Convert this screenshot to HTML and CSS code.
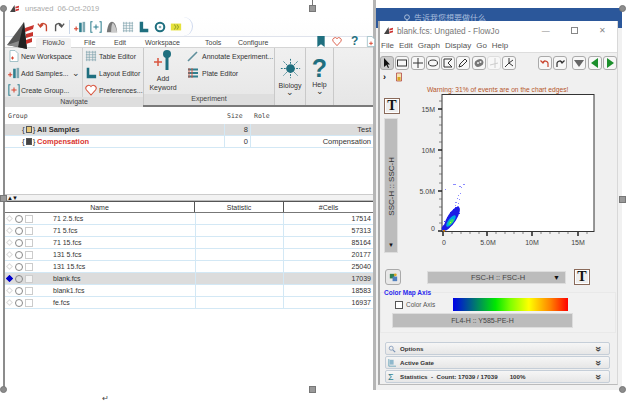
FILE: index.html
```html
<!DOCTYPE html>
<html lang="en">

<head>
  <meta charset="UTF-8" />
  <meta name="viewport" content="width=device-width, initial-scale=1.0" />
  <title>FlowJo</title>
  <link rel="stylesheet" href="styles.css">
</head>

<body>
  <div class="canvas">

    <!-- Workspace window -->
    <div class="workspace">
      <div class="title-row">
        <svg class="mini-logo" viewBox="0 0 12 10"><path d="M1 9 6 1l1 8z" fill="#444"/><path d="M7 3l4-1v2l-4 1zM7 6l4-1v2l-4 1z" fill="#c33"/></svg>
        <span>unsaved&nbsp; 06-Oct-2019</span>
      </div>
      <div class="quick-row">
        <svg class="logo" viewBox="0 0 27 27">
          <path d="M0 23 17 0l3 27z" fill="#555"/>
          <path d="M17 0l3 27-9-2z" fill="#222"/>
          <path d="M0 23l11 2 1-6z" fill="#8a8a8a"/>
          <path d="M18 6l9-3-1 4-8 3zM19 12l7-2v4l-7 2zM19 18l6-2v4l-6 2z" fill="#c8352f"/>
        </svg>
        <div class="quick-icons">
          <svg viewBox="0 0 14 14"><path d="M11 12V7a3.500 3.500 0 0 0-7-1M1 3l3 4 3-3" fill="none" stroke="#c8452f" stroke-width="1.600"/></svg>
          <svg viewBox="0 0 14 14"><path d="M3 12V7a3.500 3.500 0 0 1 7-1M13 3l-3 4-3-3" fill="none" stroke="#555" stroke-width="1.600"/></svg>
          <i class="quick-sep"></i>
          <svg viewBox="0 0 14 14"><rect x="6" y="2" width="3" height="11" fill="#2f7f8f"/><rect x="10" y="1" width="3" height="12" fill="#7fa9b3"/><path d="M0 9h5M2.500 6.500v5" stroke="#d9442f" stroke-width="1.300"/></svg>
          <svg viewBox="0 0 14 14"><path d="M3 1H1v12h2M11 1h2v12h-2M7 4v6M4 7h6" fill="none" stroke="#2f7f8f" stroke-width="1.200"/></svg>
          <svg viewBox="0 0 14 14"><path d="M1 13C2 5 4 1 7 1s5 4 6 12z" fill="#777"/><path d="M6 13C6 6 7 3 8 2c2 2 4 6 5 11z" fill="#c9c9c9"/></svg>
          <svg viewBox="0 0 14 14"><path d="M1 2.500h12M1 5.500h12M1 8.500h12M1 11.500h12M2 1v12M5 1v12M9 1v12M12 1v12" stroke="#7fa3ad" stroke-width=".8"/></svg>
          <svg viewBox="0 0 14 14"><path d="M2 1h4v8h6v4H2z" fill="#1f6f7f"/></svg>
          <svg viewBox="0 0 14 14"><circle cx="7" cy="7" r="5" fill="none" stroke="#1f6f7f" stroke-width="2.400"/><circle cx="7" cy="7" r="1.600" fill="#7fa9b3"/></svg>
          <svg viewBox="0 0 14 14"><rect x="1" y="3" width="12" height="8" fill="#e6e23c"/><path d="M5 4l2 3-2 3M8 4l2 3-2 3" fill="none" stroke="#9aa52a" stroke-width="1.200"/></svg>
        </div>
      </div>

      <div class="tab-row">
        <span class="tab tab-active">FlowJo</span>
        <span class="tab tab-file">File</span>
        <span class="tab tab-edit">Edit</span>
        <span class="tab tab-workspace">Workspace</span>
        <span class="tab tab-tools">Tools</span>
        <span class="tab tab-configure">Configure</span>
        <div class="tab-icons">
          <svg viewBox="0 0 10 12"><path d="M1 0h8v12L5 9l-4 3z" fill="#1f6f7f"/></svg>
          <svg viewBox="0 0 12 12"><path d="M6 11 1.500 6a2.700 2.700 0 0 1 4.500-3.500A2.700 2.700 0 0 1 10.500 6z" fill="#fff" stroke="#d9553f" stroke-width="1.100"/></svg>
          <span class="tab-help">?</span>
          <svg viewBox="0 0 10 12"><path d="M1 .5h5l3 3v8H1z" fill="#fff" stroke="#8fb5bd" stroke-width=".8"/><path d="M3 8h4M5 6v4" stroke="#d9442f"/></svg>
        </div>
      </div>

      <div class="ribbon">
        <div class="ribbon-group group-navigate">
          <div class="ribbon-body">
            <div class="ribbon-col col-nav">
              <div class="ribbon-item">
                <svg viewBox="0 0 12 12"><path d="M2 .5h5l3 3v8H2z" fill="#fff" stroke="#8fb5bd" stroke-width=".8"/><path d="M3 8h3M4.500 6.500v3" stroke="#d9442f"/></svg>
                <span>New Workspace</span>
              </div>
              <div class="ribbon-item">
                <svg viewBox="0 0 14 14"><rect x="6" y="2" width="3" height="11" fill="#2f7f8f"/><rect x="10" y="1" width="3" height="12" fill="#7fa9b3"/><path d="M0 9h5M2.500 6.500v5" stroke="#d9442f" stroke-width="1.300"/></svg>
                <span>Add Samples...</span>
                <b class="chev">⌄</b>
              </div>
              <div class="ribbon-item">
                <svg viewBox="0 0 14 14"><path d="M3 1H1v12h2M11 1h2v12h-2" fill="none" stroke="#2f7f8f" stroke-width="1.200"/><path d="M7 4v6M4 7h6" stroke="#d9442f" stroke-width="1.200"/></svg>
                <span>Create Group...</span>
              </div>
            </div>
            <div class="ribbon-col col-editors">
              <div class="ribbon-item">
                <svg viewBox="0 0 14 14"><path d="M1 2.500h12M1 5.500h12M1 8.500h12M1 11.500h12M2 1v12M5 1v12M9 1v12M12 1v12" stroke="#7fa3ad" stroke-width=".8"/></svg>
                <span>Table Editor</span>
              </div>
              <div class="ribbon-item">
                <svg viewBox="0 0 14 14"><path d="M2 1h3v8h8v4H2z" fill="#1f6f7f"/></svg>
                <span>Layout Editor</span>
              </div>
              <div class="ribbon-item">
                <svg viewBox="0 0 12 12"><path d="M6 11 1.500 6a2.700 2.700 0 0 1 4.500-3.500A2.700 2.700 0 0 1 10.500 6z" fill="#fff" stroke="#d9553f" stroke-width="1.100"/></svg>
                <span>Preferences...</span>
              </div>
            </div>
          </div>
          <div class="ribbon-caption">Navigate</div>
        </div>

        <div class="ribbon-group group-experiment">
          <div class="ribbon-body">
            <div class="add-keyword">
              <svg viewBox="0 0 20 22"><path d="M1 13h8M5 9v8" stroke="#d9553f" stroke-width="1.500"/><circle cx="14" cy="5" r="4" fill="#1f6f7f"/><rect x="12.500" y="7" width="3" height="14" fill="#1f6f7f"/></svg>
              <span>Add<br>Keyword</span>
            </div>
            <div class="ribbon-col col-experiment">
              <div class="ribbon-item">
                <svg viewBox="0 0 12 12"><path d="M1 11 10 2" stroke="#5f8f9c" stroke-width="1.600"/></svg>
                <span>Annotate Experiment...</span>
              </div>
              <div class="ribbon-item">
                <svg viewBox="0 0 12 12"><path d="M1 2.500h10M1 6h10M1 9.500h10" stroke="#2f7f8f" stroke-width="2"/><path d="M2 1v10M5 1v10" stroke="#d9553f" stroke-width=".9"/></svg>
                <span>Plate Editor</span>
              </div>
            </div>
          </div>
          <div class="ribbon-caption">Experiment</div>
        </div>

        <div class="ribbon-group group-biology">
          <svg viewBox="0 0 24 24"><g stroke="#1f6f7f" stroke-width="1.100" stroke-dasharray="2 1.500"><path d="M12 1v22M1 12h22M4 4l16 16M20 4 4 20"/></g><circle cx="12" cy="12" r="5" fill="#1f6f7f"/></svg>
          <span>Biology</span>
          <b class="chev">⌄</b>
        </div>
        <div class="ribbon-group group-help">
          <span class="big-help">?</span>
          <span>Help</span>
          <b class="chev">⌄</b>
        </div>
      </div>

      <!-- Groups table -->
      <div class="groups">
        <div class="group-head">
          <span class="cell c-group">Group</span>
          <span class="cell c-size">Size</span>
          <span class="cell c-role">Role</span>
        </div>
        <div class="group-row row-selected">
          <span class="cell c-group"><em class="brace">{<i class="brace-doc"></i>}</em><strong>All Samples</strong></span>
          <span class="cell c-size num">8</span>
          <span class="cell c-role num">Test</span>
        </div>
        <div class="group-row">
          <span class="cell c-group"><em class="brace">{<i class="brace-doc brace-comp"></i>}</em><strong class="comp">Compensation</strong></span>
          <span class="cell c-size num">0</span>
          <span class="cell c-role num">Compensation</span>
        </div>
      </div>

      <div class="divider"><span>▲▼</span></div>

      <!-- Samples table -->
      <div class="sample-head">
        <span class="cell c-name">Name</span>
        <span class="cell c-stat">Statistic</span>
        <span class="cell c-cells">#Cells</span>
      </div>
      <div class="sample-row"><span class="marks"><i class="diamond"></i><i class="ring"></i><i class="box"></i></span><span class="cell c-file">71 2.5.fcs</span><span class="cell c-stat"></span><span class="cell c-cells num">17514</span></div>
      <div class="sample-row"><span class="marks"><i class="diamond"></i><i class="ring"></i><i class="box"></i></span><span class="cell c-file">71 5.fcs</span><span class="cell c-stat"></span><span class="cell c-cells num">57313</span></div>
      <div class="sample-row"><span class="marks"><i class="diamond"></i><i class="ring"></i><i class="box"></i></span><span class="cell c-file">71 15.fcs</span><span class="cell c-stat"></span><span class="cell c-cells num">85164</span></div>
      <div class="sample-row"><span class="marks"><i class="diamond"></i><i class="ring"></i><i class="box"></i></span><span class="cell c-file">131 5.fcs</span><span class="cell c-stat"></span><span class="cell c-cells num">20177</span></div>
      <div class="sample-row"><span class="marks"><i class="diamond"></i><i class="ring"></i><i class="box"></i></span><span class="cell c-file">131 15.fcs</span><span class="cell c-stat"></span><span class="cell c-cells num">25040</span></div>
      <div class="sample-row row-selected"><span class="marks"><i class="diamond diamond-on"></i><i class="ring"></i><i class="box box-on"></i></span><span class="cell c-file">blank.fcs</span><span class="cell c-stat"></span><span class="cell c-cells num">17039</span></div>
      <div class="sample-row"><span class="marks"><i class="diamond"></i><i class="ring"></i><i class="box"></i></span><span class="cell c-file">blank1.fcs</span><span class="cell c-stat"></span><span class="cell c-cells num">18583</span></div>
      <div class="sample-row"><span class="marks"><i class="diamond"></i><i class="ring"></i><i class="box"></i></span><span class="cell c-file">fe.fcs</span><span class="cell c-stat"></span><span class="cell c-cells num">16937</span></div>
    </div>

    <!-- Word window behind the graph -->
    <div class="word-bar">
      <svg viewBox="0 0 10 10"><circle cx="5" cy="4" r="3" fill="none" stroke="#c5d3e8"/><path d="M4 8h2" stroke="#c5d3e8"/></svg>
      <span>告诉我您想要做什么</span>
    </div>
    <div class="word-edge"></div>

    <!-- Graph window -->
    <div class="graph">
      <div class="graph-title">
        <svg class="mini-logo" viewBox="0 0 12 10"><path d="M1 9 6 1l1 8z" fill="#444"/><path d="M7 3l4-1v2l-4 1zM7 6l4-1v2l-4 1z" fill="#c33"/></svg>
        <span class="graph-name">blank.fcs: Ungated - FlowJo</span>
        <span class="win-btn">—</span>
        <span class="win-btn win-max"></span>
        <span class="win-btn win-close">✕</span>
      </div>
      <div class="graph-menu">
        <span>File</span><span>Edit</span><span>Graph</span><span>Display</span><span>Go</span><span>Help</span>
      </div>
      <div class="graph-tools">
        <span class="tool tool-on"><svg viewBox="0 0 10 10"><path d="M2 0v9l2.500-2 1.500 3 1-.500L5.500 6.500H8z" fill="#111"/></svg></span>
        <span class="tool"><svg viewBox="0 0 10 10"><rect x=".5" y="2" width="9" height="6" fill="none" stroke="#333"/></svg></span>
        <span class="tool"><svg viewBox="0 0 10 10"><path d="M5 0v10M0 5h10" stroke="#333"/></svg></span>
        <span class="tool"><svg viewBox="0 0 10 10"><ellipse cx="5" cy="5" rx="4.500" ry="3" fill="none" stroke="#333"/></svg></span>
        <span class="tool"><svg viewBox="0 0 10 10"><path d="M1 1h8L5 5l4 4H1z" fill="none" stroke="#333"/></svg></span>
        <span class="tool"><svg viewBox="0 0 10 10"><path d="M1 9l1-3 5-5 2 2-5 5z" fill="none" stroke="#333"/></svg></span>
        <span class="tool"><svg viewBox="0 0 10 10"><ellipse cx="5" cy="5" rx="4.500" ry="3.500" fill="#777" transform="rotate(-25 5 5)"/><circle cx="4" cy="5" r="1" fill="#eee"/><circle cx="6.500" cy="4" r="1" fill="#eee"/></svg></span>
        <span class="tool tool-off"><svg viewBox="0 0 10 10"><path d="M6 0v10M1 7l8-2" stroke="#ccc"/></svg></span>
        <span class="tool"><svg viewBox="0 0 10 10"><path d="M5 0v5L1 9M5 5l4 3M5 5l4-3" fill="none" stroke="#333"/></svg></span>
        <span class="tool tool-undo"><svg viewBox="0 0 10 10"><path d="M8 9V5a3 3 0 0 0-5-1M.5 2.500 3 5l2-2.500" fill="none" stroke="#c8452f" stroke-width="1.200"/></svg></span>
        <span class="tool"><svg viewBox="0 0 10 10"><path d="M2 9V5a3 3 0 0 1 5-1M9.500 2.500 7 5 5 2.500" fill="none" stroke="#333" stroke-width="1.200"/></svg></span>
        <span class="tool tool-nav"><svg viewBox="0 0 10 10"><path d="M0 2h10L5 9z" fill="#666"/></svg></span>
        <span class="tool"><svg viewBox="0 0 10 10"><path d="M8 0v10L1 5z" fill="#1b8f2b"/></svg></span>
        <span class="tool"><svg viewBox="0 0 10 10"><path d="M2 0v10l7-5z" fill="#1b8f2b"/></svg></span>
      </div>
      <div class="graph-sub">
        <span class="caret">›</span>
        <svg viewBox="0 0 6 10"><path d="M.5 1h5v8h-5z" fill="#f4e3b0" stroke="#a33" stroke-width=".7"/><rect x="1.500" y="5" width="3" height="3.500" fill="#d9a520"/></svg>
      </div>
      <div class="warning">Warning: 31% of events are on the chart edges!</div>

      <div class="plot-area">
        <div class="plot-left">
          <span class="t-btn">T</span>
          <div class="y-axis">
            <span class="y-label">SSC-H :: SSC-H</span>
            <span class="y-arrow">▼</span>
          </div>
        </div>
        <svg class="plot" viewBox="0 0 190 170">
          <rect x="37" y=".5" width="152" height="137" fill="#fff" stroke="#333"/>
          <!-- axis ticks -->
          <path d="M33 15h4M33 56h4M33 97h4M33 137h4" stroke="#222" stroke-width="1.500"/>
          <path d="M34 7h3M34 23h3M34 31h3M34 39h3M34 48h3M34 64h3M34 72h3M34 80h3M34 89h3M34 105h3M34 113h3M34 121h3M34 129h3" stroke="#555" stroke-width=".7"/>
          <path d="M38 138v4M82 138v4M127 138v4M173 138v4" stroke="#222" stroke-width="1.500"/>
          <path d="M47 138v2M56 138v2M65 138v2M74 138v2M91 138v2M100 138v2M109 138v2M118 138v2M136 138v2M145 138v2M154 138v2M163 138v2M182 138v2" stroke="#555" stroke-width=".7"/>
          <text x="30" y="18" class="tick" text-anchor="end">15M</text>
          <text x="30" y="59" class="tick" text-anchor="end">10M</text>
          <text x="30" y="100" class="tick" text-anchor="end">5.0M</text>
          <text x="30" y="137" class="tick" text-anchor="end">0</text>
          <text x="39" y="151" class="tick" text-anchor="middle">0</text>
          <text x="83" y="151" class="tick" text-anchor="middle">5.0M</text>
          <text x="127" y="151" class="tick" text-anchor="middle">10M</text>
          <text x="173" y="151" class="tick" text-anchor="middle">15M</text>
          <!-- events -->
          <g fill="#8a8aff">
            <rect x="40" y="95" width="1" height="1"/><rect x="48" y="90" width="3" height="1"/><rect x="54" y="92" width="2" height="1"/><rect x="58" y="90" width="2" height="1"/><rect x="56" y="93" width="1" height="1"/><rect x="53" y="101" width="1" height="1"/><rect x="55" y="99" width="1" height="1"/><rect x="52" y="104" width="1" height="1"/><rect x="54" y="105" width="1" height="1"/><rect x="50" y="108" width="2" height="1"/><rect x="53" y="109" width="1" height="1"/><rect x="50" y="111" width="1" height="1"/><rect x="52" y="112" width="2" height="1"/>
          </g>
          <g fill="#3c3cf5">
            <rect x="50" y="113" width="4" height="2"/><rect x="48" y="115" width="5" height="2"/><rect x="45" y="118" width="1" height="1"/><rect x="53" y="116" width="1" height="1"/><rect x="42" y="123" width="1" height="1"/><rect x="39" y="127" width="1" height="1"/><rect x="54" y="119" width="1" height="1"/>
          </g>
          <ellipse cx="47" cy="124" rx="13" ry="4.500" transform="rotate(-58 47 124)" fill="#1c1ce6"/>
          <ellipse cx="41" cy="133" rx="5" ry="3" transform="rotate(-35 41 133)" fill="#1c1ce6"/>
          <ellipse cx="46" cy="127" rx="7" ry="2.600" transform="rotate(-52 46 127)" fill="#00a8e0"/>
          <ellipse cx="46" cy="128" rx="3.600" ry="1.500" transform="rotate(-50 46 128)" fill="#35e060"/>
          <rect x="45" y="128" width="1" height="1" fill="#e8e830"/>
          <rect x="38" y="136" width="2" height="1.500" fill="#d98000"/>
        </svg>
      </div>

      <div class="x-row">
        <span class="swatch-btn"><svg viewBox="0 0 12 12"><path d="M2 2h5v5H2z" fill="#2f7f4f"/><path d="M5 5h5v5H5z" fill="#4f7fbf"/><circle cx="8" cy="3" r="1.500" fill="#d9a520"/></svg></span>
        <div class="x-select"><span>FSC-H :: FSC-H</span><b>▼</b></div>
        <span class="t-btn">T</span>
      </div>

      <div class="color-panel">
        <div class="color-title">Color Map Axis</div>
        <div class="color-row">
          <i class="check"></i>
          <span>Color Axis</span>
          <div class="gradient"></div>
        </div>
        <div class="param-btn">FL4-H :: Y585-PE-H</div>
      </div>

      <div class="drawer">
        <svg viewBox="0 0 10 10"><circle cx="4" cy="4" r="2.500" fill="none" stroke="#7a93b5"/><path d="M6 6l3 3" stroke="#7a93b5" stroke-width="1.500"/></svg>
        <span>Options</span><b>»</b>
      </div>
      <div class="drawer">
        <svg viewBox="0 0 10 10"><path d="M1 0v9h9" fill="none" stroke="#5f9fb5"/><rect x="2" y="1" width="5" height="6" fill="#8fb8cc"/></svg>
        <span>Active Gate</span><b>»</b>
      </div>
      <div class="drawer">
        <em class="sigma">Σ</em>
        <span class="stat-text"><span>Statistics&nbsp; -&nbsp; Count: 17039 / 17039</span><span>100%</span></span><b>»</b>
      </div>
    </div>

    <!-- Document image handles -->
    <i class="edge-line"></i>
    <i class="handle h-tl"></i>
    <i class="handle h-tr"></i>
    <i class="handle h-bl"></i>
    <i class="handle h-br"></i>
    <i class="handle-sq s-t"></i>
    <i class="handle-sq s-b"></i>
    <i class="handle-sq s-l"></i>
    <i class="handle-sq s-r"></i>
    <i class="handle-stem"></i>
    <span class="return-mark">↵</span>
  </div>
</body>

</html>
```

FILE: styles.css
```css
* {
  margin: 0;
  padding: 0;
  box-sizing: border-box;
}

body {
  background-color: #fff;
  font-family: "Liberation Sans", sans-serif;
  color: #333;
  overflow: hidden;
}

i,
em {
  font-style: normal;
}

svg {
  display: block;
  flex: none;
}

.canvas {
  position: relative;
  width: 628px;
  height: 403px;
  overflow: hidden;
}

/* workspace window */
.workspace {
  position: absolute;
  left: 5px;
  top: 0;
  width: 371px;
  height: 390px;
  border-right: 3px solid #b5b5b5;
  font-size: 7px;
}

.title-row {
  display: flex;
  align-items: center;
  gap: 5px;
  height: 17px;
  padding: 0 0 0 4px;
  color: #aaa;
  font-size: 7.500px;
  line-height: 18px;
}

.mini-logo {
  width: 11px;
  height: 9px;
}

.quick-row {
  position: relative;
  height: 19px;
  background: linear-gradient(#fff, #fdfdfd);
}

.logo {
  position: absolute;
  left: 2px;
  top: 5px;
  width: 27px;
  height: 27px;
  z-index: 2;
}

.quick-icons {
  display: flex;
  align-items: center;
  gap: 4px;
  height: 19px;
  width: 188px;
  padding-left: 32px;
  border-right: 1px solid #cfd9ee;
  border-radius: 0 10px 10px 0;
}

.quick-icons svg {
  width: 12px;
  height: 12px;
}

.quick-sep {
  width: 1px;
  height: 14px;
  background: #c8d6e8;
}

.tab-row {
  display: flex;
  align-items: center;
  height: 11px;
  border-top: 1px solid #dfe3ec;
  position: relative;
  color: #444;
}

.tab {
  position: absolute;
  top: 1px;
  line-height: 10px;
}

.tab-active {
  left: 31px;
  width: 35px;
  height: 11px;
  text-align: center;
  background: #f2f2f2;
  border-radius: 2px 2px 0 0;
}

.tab-file {
  left: 79px;
}

.tab-edit {
  left: 109px;
}

.tab-workspace {
  left: 140px;
}

.tab-tools {
  left: 200px;
}

.tab-configure {
  left: 233px;
}

.tab-icons {
  position: absolute;
  left: 311px;
  top: -1px;
  display: flex;
  align-items: center;
  gap: 6px;
}

.tab-icons svg {
  width: 10px;
  height: 11px;
}

.tab-help {
  margin: 0 2px 0 3px;
  color: #1f6f7f;
  font-size: 12px;
  font-weight: bold;
  line-height: 11px;
}

.ribbon {
  display: flex;
  height: 60px;
  background: linear-gradient(#f0f0f0, #e6e6e6);
  border-top: 1px solid #d5d5d5;
  border-bottom: 2px solid #7a7a7a;
}

.ribbon-group {
  display: flex;
  flex-direction: column;
  border-right: 1px solid #c9c9c9;
}

.group-navigate {
  width: 139px;
}

.group-experiment {
  width: 131px;
}

.ribbon-body {
  display: flex;
  flex: 1;
}

.ribbon-col {
  display: flex;
  flex-direction: column;
  gap: 3px;
  padding: 1px 0 0 3px;
}

.col-nav {
  width: 78px;
  border-right: 1px solid #d0d0d0;
}

.col-editors {
  padding-left: 2px;
}

.col-experiment {
  padding-left: 5px;
}

.ribbon-item {
  display: flex;
  align-items: center;
  gap: 1px;
  height: 14px;
  white-space: nowrap;
}

.ribbon-item svg {
  width: 12px;
  height: 12px;
}

.col-editors .ribbon-item,
.col-experiment .ribbon-item {
  gap: 2px;
}

.col-experiment .ribbon-item {
  gap: 3px;
}

.chev {
  font-weight: normal;
  line-height: 6px;
  font-size: 9px;
  color: #333;
}

.ribbon-item .chev {
  margin-left: 3px;
}

.ribbon-caption {
  height: 11px;
  line-height: 10px;
  text-align: center;
  background: #dedede;
  color: #444;
}

.add-keyword {
  display: flex;
  flex-direction: column;
  align-items: center;
  width: 38px;
  padding-top: 1px;
  text-align: center;
  line-height: 9px;
  gap: 3px;
}

.add-keyword svg {
  width: 20px;
  height: 22px;
}

.group-biology,
.group-help {
  align-items: center;
  height: 100%;
}

.group-biology {
  width: 31px;
  padding-top: 10px;
}

.group-biology svg {
  width: 21px;
  height: 21px;
  margin-bottom: 3px;
}

.group-help {
  width: 28px;
  padding-top: 9px;
}

.big-help {
  color: #1f6f7f;
  font-size: 25px;
  font-weight: bold;
  line-height: 23px;
  height: 24px;
}

/* groups table */
.groups {
  height: 88px;
  border-bottom: 1px solid #ccc;
}

.group-head {
  display: flex;
  height: 17px;
  align-items: flex-end;
  padding-bottom: 2px;
  font-family: "DejaVu Sans Mono", monospace;
  font-size: 6.500px;
  color: #444;
}

.group-head .c-size,
.group-head .c-role {
  height: auto;
  border-left-color: transparent;
}

.group-row {
  display: flex;
  height: 12px;
  align-items: center;
  border-bottom: 1px solid #d3e8f5;
  font-size: 7.500px;
}

.row-selected {
  background: #dcdcdc;
}

.cell {
  display: block;
  padding: 0 2px;
  white-space: nowrap;
  line-height: 11px;
}

.c-group {
  width: 219px;
  padding-left: 3px;
}

.group-row .c-group {
  display: flex;
  align-items: center;
  padding-left: 17px;
}

.c-size {
  width: 26px;
  height: 100%;
  border-left: 1px solid #d3e8f5;
}

.c-role {
  flex: 1;
  height: 100%;
  border-left: 1px solid #d3e8f5;
  padding-left: 3px;
}

.num {
  text-align: right;
}

.brace {
  display: flex;
  align-items: center;
  gap: 1px;
  width: 15px;
  font-size: 8px;
  color: #333;
}

.brace-doc {
  width: 6px;
  height: 7px;
  border: 1px solid #555;
  background: #e8c878;
}

.brace-comp {
  background: #444;
}

.comp {
  color: #d9352f;
}

.divider {
  height: 6px;
  border-bottom: 1px solid #bbb;
  background: #f2f2f2;
  font-size: 6px;
  line-height: 6px;
  letter-spacing: -1px;
  color: #111;
  padding-left: 2px;
}

/* samples table */
.sample-head {
  display: flex;
  height: 12px;
  border-top: 1px solid #555;
  border-bottom: 1px solid #777;
  text-align: center;
  align-items: center;
  font-size: 7px;
  color: #333;
}

.c-name {
  width: 190px;
  height: 100%;
  border-right: 1px solid #555;
}

.c-stat {
  width: 89px;
  height: 100%;
  border-right: 1px solid #555;
}

.c-cells {
  flex: 1;
  height: 100%;
}

.sample-row {
  display: flex;
  height: 12px;
  align-items: center;
  border-bottom: 1px solid #d3e8f5;
  font-size: 7px;
}

.sample-row .c-stat {
  border-right-color: #d3e8f5;
  border-left: 1px solid #d3e8f5;
}

.sample-row .c-file {
  width: 149px;
  padding-left: 7px;
}

.marks {
  display: flex;
  align-items: center;
  gap: 2px;
  width: 41px;
  padding-left: 1px;
}

.diamond {
  width: 5px;
  height: 5px;
  margin: 0 1px;
  transform: rotate(45deg);
  border: 1px solid #ddd;
  background: #fff;
}

.diamond-on {
  background: #00c;
  border-color: #00c;
}

.ring {
  width: 8px;
  height: 8px;
  border: 1px solid #888;
  border-radius: 50%;
}

.box {
  width: 8px;
  height: 8px;
  border: 1px solid #ccc;
  background: #fff;
}

.box-on {
  background: #f4f4f4;
}

/* word window strip */
.word-bar {
  position: absolute;
  left: 376px;
  top: 8px;
  display: flex;
  align-items: center;
  gap: 3px;
  width: 246px;
  height: 20px;
  padding: 0 0 0 27px;
  background: #2b579a;
  color: #a9bedd;
  font-family: "Noto Sans CJK SC", sans-serif;
  font-size: 8px;
  line-height: 20px;
}

.word-bar svg {
  width: 8px;
  height: 8px;
}

.word-edge {
  position: absolute;
  left: 376px;
  top: 28px;
  width: 246px;
  height: 362px;
  background: #f1f1f1;
}

/* graph window */
.graph {
  position: absolute;
  left: 378px;
  top: 21px;
  width: 240px;
  height: 364px;
  background: #f0f0f0;
  border-left: 2px solid #aaa;
  border-right: 1px solid #d8d8d8;
  border-bottom: 1px solid #bbb;
  font-size: 7px;
}

.graph-title {
  display: flex;
  align-items: center;
  height: 20px;
  padding: 0 0 1px 3px;
  background: #fff;
  color: #777;
  font-size: 8.300px;
}

.graph-name {
  margin-left: 3px;
  width: 135px;
}

.win-btn {
  width: 29px;
  text-align: center;
  font-size: 8px;
  color: #888;
}

.win-max {
  width: 7px;
  height: 7px;
  margin: 0 10px 0 11px;
  border: 1px solid #888;
}

.graph-menu {
  display: flex;
  gap: 5px;
  height: 11px;
  padding-left: 1px;
  background: #fff;
  color: #555;
  font-size: 8px;
  line-height: 10px;
}

.graph-tools {
  display: flex;
  align-items: center;
  gap: 1.300px;
  height: 19px;
  padding: 1px 0 0;
  border-top: 1px solid #ddd;
}

.tool {
  display: flex;
  align-items: center;
  justify-content: center;
  width: 14px;
  height: 14px;
  background: #f7f7f7;
  border: 1px solid #aaa;
  border-radius: 3px;
}

.tool svg {
  width: 10px;
  height: 10px;
}

.tool-on {
  background: #ccc;
}

.tool-off {
  border-color: #ddd;
}

.tool-undo {
  margin-left: 20px;
}

.tool-nav {
  margin-left: 4px;
}

.graph-sub {
  display: flex;
  align-items: center;
  gap: 10px;
  height: 12px;
  padding-left: 3px;
  font-size: 9px;
}

.graph-sub svg {
  width: 6px;
  height: 10px;
}

.caret {
  font-weight: bold;
  color: #111;
}

.warning {
  height: 11px;
  padding: 3px 0 0 47px;
  color: #b5552a;
  font-size: 6.700px;
  line-height: 7px;
}

.plot-area {
  display: flex;
  height: 174px;
  padding: 0 0 0 4px;
}

.plot-left {
  display: flex;
  flex-direction: column;
  gap: 4px;
  width: 21px;
  padding-top: 4px;
}

.t-btn {
  display: block;
  width: 16px;
  height: 16px;
  border: 1px solid #8a6a5a;
  outline: 1px solid #fff;
  outline-offset: -2px;
  background: #eee;
  color: #111;
  font-family: "Liberation Serif", serif;
  font-size: 14px;
  font-weight: bold;
  line-height: 14px;
  text-align: center;
}

.y-axis {
  position: relative;
  width: 14px;
  height: 135px;
  background: #bcbcbc;
  border: 1px solid #ddd;
}

.y-label {
  position: absolute;
  left: 2px;
  top: 38px;
  writing-mode: vertical-rl;
  transform: rotate(180deg);
  font-size: 8px;
  line-height: 9px;
  color: #333;
  white-space: nowrap;
}

.y-arrow {
  position: absolute;
  left: 3px;
  bottom: 4px;
  font-size: 6px;
  color: #111;
}

.plot {
  width: 190px;
  height: 170px;
  overflow: visible;
}

.tick {
  font-family: "Liberation Sans", sans-serif;
  font-size: 7px;
  fill: #444;
}

.x-row {
  display: flex;
  align-items: center;
  height: 18px;
  padding-left: 5px;
}

.swatch-btn {
  display: flex;
  align-items: center;
  justify-content: center;
  width: 16px;
  height: 16px;
  border: 1px solid #aaa;
  border-radius: 3px;
  background: #e8e8e8;
}

.swatch-btn svg {
  width: 11px;
  height: 11px;
}

.x-select {
  display: flex;
  align-items: center;
  justify-content: space-between;
  width: 139px;
  height: 13px;
  margin: 0 8px 0 26px;
  padding: 0 5px 0 43px;
  background: #bcbcbc;
  border: 1px solid #ddd;
  font-size: 7.500px;
  color: #444;
}

.x-select b {
  font-size: 7px;
  color: #111;
}

.color-panel {
  position: relative;
  height: 41px;
  margin: 6px 1px 0 0;
  background: #f1f1f1;
  border: 1px solid #e9e9e9;
}

.color-title {
  position: absolute;
  left: 3px;
  top: -4px;
  color: #2a2aee;
  font-size: 6.500px;
  font-weight: bold;
  line-height: 8px;
}

.color-row {
  display: flex;
  align-items: center;
  height: 13px;
  margin-top: 5px;
  padding-left: 14px;
  color: #555;
  font-size: 6.500px;
}

.check {
  width: 8px;
  height: 8px;
  margin-right: 3px;
  border: 1px solid #555;
  background: #fff;
}

.gradient {
  width: 115px;
  height: 13px;
  margin-left: 18px;
  background: linear-gradient(90deg, #0000e8, #00e800 37%, #7fff00 50%, #ffff00 66%, #ff8000 85%, #ff0000);
}

.param-btn {
  width: 181px;
  height: 15px;
  margin: 2px 0 0 11px;
  background: #bcbcbc;
  border: 1px solid #ddd;
  color: #444;
  font-size: 7px;
  line-height: 13px;
  text-align: center;
}

.drawer {
  display: flex;
  align-items: center;
  width: 225px;
  height: 13px;
  margin: 1px 0 0 5px;
  padding: 0 8px 0 2px;
  background: linear-gradient(#f6f6f6, #e6e6e6);
  border: 1px solid #c5ced8;
  border-radius: 2px;
  font-size: 6.200px;
  font-weight: bold;
  color: #333;
}

.color-panel + .drawer {
  margin-top: 9px;
}

.drawer svg {
  width: 8px;
  height: 8px;
  margin-right: 4px;
}

.drawer > span {
  flex: 1;
}

.stat-text {
  display: flex;
  gap: 12px;
}

.drawer b {
  transform: rotate(90deg);
  font-size: 10px;
  line-height: 8px;
  color: #444;
}

.sigma {
  width: 8px;
  margin-right: 4px;
  color: #2f7f8f;
  font-size: 9px;
  font-weight: normal;
}

/* image handles sit over the picture */
.edge-line {
  position: absolute;
  left: 3px;
  top: 8px;
  width: 2px;
  height: 382px;
  background: #8c8c8c;
}

.handle {
  position: absolute;
  width: 7px;
  height: 7px;
  border-radius: 50%;
  background: #8c8c8c;
  border: 1px solid #777;
}

.h-tl {
  left: 0;
  top: 5px;
}

.h-tr {
  left: 619px;
  top: 5px;
}

.h-bl {
  left: 0;
  top: 386px;
}

.h-br {
  left: 619px;
  top: 386px;
}

.handle-sq {
  position: absolute;
  width: 7px;
  height: 7px;
  background: #999;
  border: 1px solid #777;
}

.s-t {
  left: 309px;
  top: 5px;
}

.s-b {
  left: 309px;
  top: 386px;
}

.s-l {
  left: 0;
  top: 195px;
}

.s-r {
  left: 619px;
  top: 196px;
}

.handle-stem {
  position: absolute;
  left: 312px;
  top: 0;
  width: 1px;
  height: 5px;
  background: #777;
}

.return-mark {
  position: absolute;
  left: 102px;
  top: 394px;
  font-size: 8px;
  line-height: 9px;
  color: #444;
}
```
